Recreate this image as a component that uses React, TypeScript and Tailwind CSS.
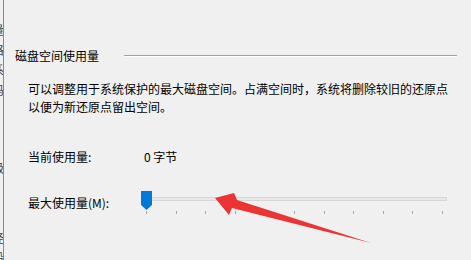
import React from "react";

const ticks = Array.from({ length: 11 }, (_, i) => i);

export default function App() {
  return (
    <div
      className="relative flex h-[260px] w-[471px] overflow-hidden bg-[#f0f0f0] text-[12px] text-black"
      style={{ fontFamily: '"Noto Sans CJK SC", "Microsoft YaHei", sans-serif' }}
    >
      {/* clipped neighbouring window edge */}
      <div className="w-[3px] shrink-0 overflow-hidden">
        <div className="ml-[-8px] flex w-[12px] flex-col text-[12px] leading-[20px] text-[#444]">
          <span className="mt-[20px]">量</span>
          <span>格</span>
          <span>系</span>
          <span>码</span>
          <span className="mt-[58px]">级</span>
          <span className="mt-[50px]">径</span>
          <span>设</span>
        </div>
      </div>
      <div className="w-px shrink-0 bg-[#8a8a8a]" />

      <div className="flex flex-1 flex-col pl-[11px]">
        {/* group title */}
        <div className="mt-[48px] flex h-[16px] items-center leading-[16px]">
          <span>磁盘空间使用量</span>
          <div className="ml-[25px] mr-[14px] flex flex-1 flex-col">
            <div className="h-px bg-[#a0a0a0]" />
            <div className="h-px bg-white" />
          </div>
        </div>

        <div className="pl-[13px]">
          <p className="mt-[16px] leading-[18px]">
            可以调整用于系统保护的最大磁盘空间。占满空间时，系统将删除较旧的还原点
            <br />
            以便为新还原点留出空间。
          </p>

          <div className="mt-[32px] flex leading-[18px]">
            <span className="w-[116px]">当前使用量:</span>
            <span>0 字节</span>
          </div>

          <div className="mt-[28px] flex leading-[18px]">
            <span className="w-[113px]">最大使用量(M):</span>
            <div className="relative h-[18px] w-[306px]">
              <div className="absolute left-[9px] top-[3px] h-[4px] w-[297px] border border-[#d6d6d6] bg-[#e7e7e7]" />
              <div className="absolute left-[5px] top-[17px] flex w-[297px] justify-between">
                {ticks.map((t) => (
                  <div key={t} className="h-[3px] w-px bg-[#a8a8a8]" />
                ))}
              </div>
              <svg className="absolute left-0 top-[-3px]" width="11" height="19" viewBox="0 0 11 19">
                <path d="M0 0H11V14L5.5 19L0 14Z" fill="#0078d7" />
              </svg>
            </div>
          </div>
        </div>
      </div>

      {/* red annotation arrow */}
      <svg className="pointer-events-none absolute inset-0" width="471" height="260" viewBox="0 0 471 260">
        <polygon
          points="215,198 234,193 237,200 371,243 232,208 229,215"
          fill="#ec3434"
        />
      </svg>
    </div>
  );
}
